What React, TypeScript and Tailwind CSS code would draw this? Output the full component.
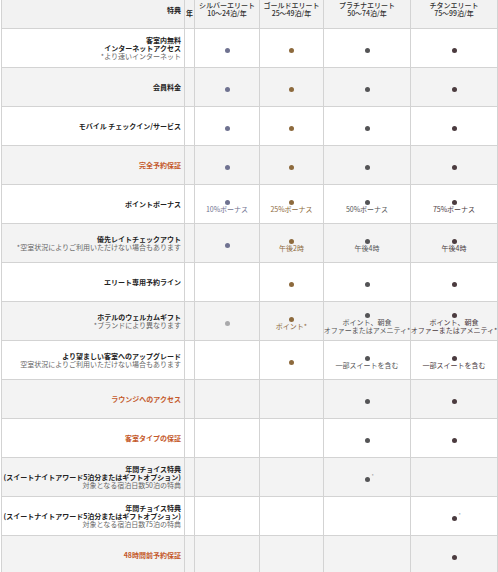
import React from "react";

type Tier = "silver" | "gold" | "plat" | "titan" | "light";

const dotColor: Record<Tier, string> = {
  silver: "bg-[#6f7290]",
  gold: "bg-[#8d6a3d]",
  plat: "bg-[#545456]",
  titan: "bg-[#4b3b3f]",
  light: "bg-[#a9a9ab]",
};

const textColor: Record<Tier, string> = {
  silver: "text-[#6f7290]",
  gold: "text-[#8d6a3d]",
  plat: "text-[#545456]",
  titan: "text-[#4b3b3f]",
  light: "text-[#a9a9ab]",
};

interface Mark {
  tier: Tier;
  lines?: string[];
  star?: boolean;
}

interface Row {
  title: string[];
  note?: string;
  orange?: boolean;
  cells: (Mark | null)[];
}

const all4 = (): (Mark | null)[] => [
  { tier: "silver" },
  { tier: "gold" },
  { tier: "plat" },
  { tier: "titan" },
];

const rows: Row[] = [
  {
    title: ["客室内無料", "インターネットアクセス"],
    note: "*より速いインターネット",
    cells: all4(),
  },
  { title: ["会員料金"], cells: all4() },
  { title: ["モバイル チェックイン/サービス"], cells: all4() },
  { title: ["完全予約保証"], orange: true, cells: all4() },
  {
    title: ["ポイントボーナス"],
    cells: [
      { tier: "silver", lines: ["10%ボーナス"] },
      { tier: "gold", lines: ["25%ボーナス"] },
      { tier: "plat", lines: ["50%ボーナス"] },
      { tier: "titan", lines: ["75%ボーナス"] },
    ],
  },
  {
    title: ["優先レイトチェックアウト"],
    note: "*空室状況によりご利用いただけない場合もあります",
    cells: [
      { tier: "silver" },
      { tier: "gold", lines: ["午後2時"] },
      { tier: "plat", lines: ["午後4時"] },
      { tier: "titan", lines: ["午後4時"] },
    ],
  },
  {
    title: ["エリート専用予約ライン"],
    cells: [null, { tier: "gold" }, { tier: "plat" }, { tier: "titan" }],
  },
  {
    title: ["ホテルのウェルカムギフト"],
    note: "*ブランドにより異なります",
    cells: [
      { tier: "light" },
      { tier: "gold", lines: ["ポイント*"] },
      { tier: "plat", lines: ["ポイント、朝食", "オファーまたはアメニティ*"] },
      { tier: "titan", lines: ["ポイント、朝食", "オファーまたはアメニティ*"] },
    ],
  },
  {
    title: ["より望ましい客室へのアップグレード"],
    note: "空室状況によりご利用いただけない場合もあります",
    cells: [
      null,
      { tier: "gold" },
      { tier: "plat", lines: ["一部スイートを含む"] },
      { tier: "titan", lines: ["一部スイートを含む"] },
    ],
  },
  {
    title: ["ラウンジへのアクセス"],
    orange: true,
    cells: [null, null, { tier: "plat" }, { tier: "titan" }],
  },
  {
    title: ["客室タイプの保証"],
    orange: true,
    cells: [null, null, { tier: "plat" }, { tier: "titan" }],
  },
  {
    title: ["年間チョイス特典", "(スイートナイトアワード5泊分またはギフトオプション)"],
    note: "対象となる宿泊日数50泊の特典",
    cells: [null, null, { tier: "plat", star: true }, null],
  },
  {
    title: ["年間チョイス特典", "(スイートナイトアワード5泊分またはギフトオプション)"],
    note: "対象となる宿泊日数75泊の特典",
    cells: [null, null, null, { tier: "titan", star: true }],
  },
  {
    title: ["48時間前予約保証"],
    orange: true,
    cells: [null, null, null, { tier: "titan" }],
  },
];

const tiers = [
  { name: "シルバーエリート", nights: "10〜24泊/年" },
  { name: "ゴールドエリート", nights: "25〜49泊/年" },
  { name: "プラチナエリート", nights: "50〜74泊/年" },
  { name: "チタンエリート", nights: "75〜99泊/年" },
];

const cell = "border-r border-b border-[#d3d3d3]";

function MarkCell({ mark, bg }: { mark: Mark | null; bg: string }) {
  return (
    <div className={`${cell} ${bg} flex flex-col items-center justify-center pt-[4px] whitespace-nowrap`}>
      {mark && (
        <>
          <div className="relative">
            <div className={`w-[5px] h-[5px] rounded-full ${dotColor[mark.tier]}`} />
            {mark.star && (
              <span className="absolute left-[7px] -top-[4px] text-[5px] leading-[5px] text-[#999]">
                *
              </span>
            )}
          </div>
          {mark.lines?.map((l, i) => (
            <div key={i} className={`text-[7px] leading-[8px] ${textColor[mark.tier]}`}>
              {l}
            </div>
          ))}
        </>
      )}
    </div>
  );
}

export default function App() {
  return (
    <div
      className="w-[498px] bg-white pl-px"
      style={{ fontFamily: '"Noto Sans CJK JP", "Noto Sans", sans-serif' }}
    >
      <div className="grid grid-cols-[183px_10px_65px_64px_87px_87px] border-l border-[#d3d3d3]">
        {/* Header */}
        <div className={`${cell} h-[29px] bg-[#f2f2f2] text-right pr-[3px] pt-[6px] text-[7px] leading-[8px] font-bold text-[#222]`}>
          特典
        </div>
        <div className={`${cell} bg-[#f2f2f2] pl-[1px] pt-[9px] text-[7px] leading-[8px] font-bold text-[#222]`}>
          年
        </div>
        {tiers.map((t) => (
          <div
            key={t.name}
            className={`${cell} bg-[#f2f2f2] pt-[1px] text-center text-[7px] leading-[8px] font-medium text-[#333] whitespace-nowrap`}
          >
            <div>{t.name}</div>
            <div>{t.nights}</div>
          </div>
        ))}

        {/* Body */}
        {rows.map((r, i) => {
          const bg = i % 2 === 1 ? "bg-[#f3f3f3]" : "bg-white";
          return (
            <React.Fragment key={i}>
              <div
                className={`${cell} ${bg} h-[39px] flex flex-col items-end justify-center pr-[3px] text-right text-[7px] leading-[8px] whitespace-nowrap`}
              >
                {r.title.map((t, j) => (
                  <div
                    key={j}
                    className={`font-bold ${r.orange ? "text-[#c4592b]" : "text-[#222]"}`}
                  >
                    {t}
                  </div>
                ))}
                {r.note && <div className="text-[#666]">{r.note}</div>}
              </div>
              <div className={`${cell} ${bg}`} />
              {r.cells.map((m, k) => (
                <MarkCell key={k} mark={m} bg={bg} />
              ))}
            </React.Fragment>
          );
        })}
      </div>
    </div>
  );
}
